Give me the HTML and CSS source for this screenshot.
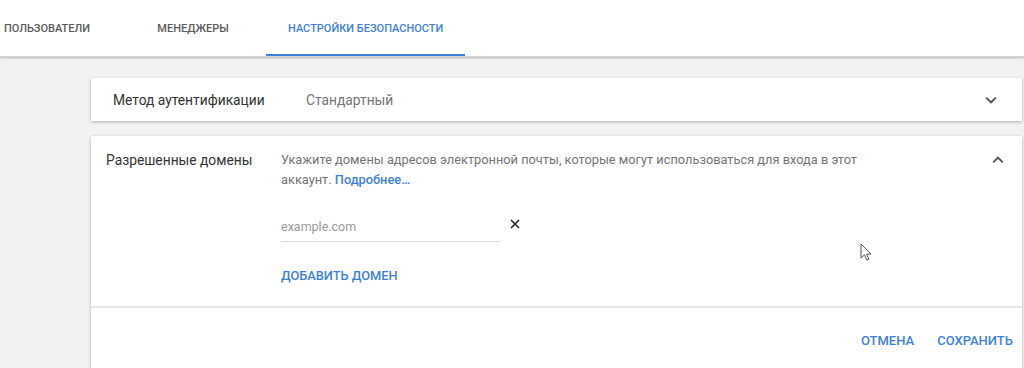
FILE: index.html
```html
<!DOCTYPE html>
<html lang="ru">
<head>
    <meta charset="UTF-8">
    <meta name="viewport" content="width=device-width, initial-scale=1.0">
    <title>Настройки безопасности</title>
    <link rel="stylesheet" href="styles.css">
</head>
<body>

    <div class="tabs">
        <div class="tab">Пользователи</div>
        <div class="tab">Менеджеры</div>
        <div class="tab active">Настройки безопасности</div>
    </div>

    <div class="content">
        <div class="card row">
            <div class="label">Метод аутентификации</div>
            <div class="value">Стандартный</div>
            <svg class="chevron" width="22" height="22" viewBox="0 0 24 24"><path d="M7.4 8.6 12 13.2l4.6-4.6L18 10l-6 6-6-6z" fill="#555"/></svg>
        </div>

        <div class="card expanded">
            <div class="body">
                <div class="label">Разрешенные домены</div>
                <div class="details">
                    <p class="hint">Укажите домены адресов электронной почты, которые могут использоваться для входа в этот аккаунт. <a href="#">Подробнее…</a></p>

                    <div class="domain">
                        <input type="text" placeholder="example.com">
                        <svg class="remove" width="10" height="10" viewBox="0 0 10 10"><path d="M1 1l8 8M9 1 1 9" stroke="#222" stroke-width="1.6"/></svg>
                    </div>

                    <button class="link">Добавить домен</button>
                </div>
                <svg class="chevron up" width="22" height="22" viewBox="0 0 24 24"><path d="M7.4 15.4 12 10.8l4.6 4.6L18 14l-6-6-6 6z" fill="#555"/></svg>
            </div>
            <div class="actions">
                <button class="link">Отмена</button>
                <button class="link">Сохранить</button>
            </div>
        </div>
    </div>

    <!-- mouse pointer from the screen capture -->
    <svg class="pointer" width="14" height="20" viewBox="0 0 14 20"><path d="M1 1v14l3.5-3.2 2.3 5.2 2-.9-2.2-5H11z" fill="#fff" stroke="#555" stroke-width="1"/></svg>

</body>
</html>
```

FILE: styles.css
```css
body {
    font-family: Roboto, "Noto Sans", Arial, sans-serif;
    margin: 0;
    height: 368px;
    overflow: hidden;
    background-color: #f2f2f2;
    position: relative;
}

.tabs {
    display: flex;
    height: 56px;
    background-color: #fff;
    border-bottom: 1px solid #d6d6d6;
    box-shadow: 0 1px 2px rgba(0, 0, 0, 0.25);
}

.tabs .tab {
    min-width: 102px;
    padding: 2px 22px 0;
    display: flex;
    align-items: center;
    justify-content: center;
    font-size: 11px;
    font-weight: 500;
    text-transform: uppercase;
    color: #5a5a5a;
    border-bottom: 2px solid transparent;
}

.tabs .tab:first-child {
    margin-left: -26px;
}

.tabs .tab.active {
    color: #3f7fe0;
    border-bottom-color: #3f7fe0;
}

.content {
    padding: 21px 2px 0 91px;
    display: flex;
    flex-direction: column;
    gap: 15px;
}

.card {
    background-color: #fff;
    box-shadow: 0 1px 3px rgba(0, 0, 0, 0.28);
}

.row {
    display: flex;
    align-items: center;
    height: 43px;
    padding: 0 20px 0 22px;
    font-size: 13.8px;
}

.row .label {
    width: 193px;
    color: #333;
}

.row .value {
    flex: 1;
    color: #757575;
}

.expanded .body {
    display: flex;
    padding: 14px 13px 0 15px;
    height: 156px;
    border-bottom: 2px solid #e6e6e6;
}

.expanded .label {
    width: 175px;
    font-size: 13.8px;
    color: #333;
    line-height: 20px;
}

.details {
    flex: 1;
}

.hint {
    margin: 0;
    max-width: 590px;
    font-size: 12.8px;
    line-height: 20px;
    color: #757575;
}

.hint a {
    color: #3f7fe0;
    text-decoration: none;
    font-weight: 500;
}

.domain {
    display: flex;
    align-items: center;
    gap: 10px;
    margin-top: 23px;
}

.domain input {
    width: 219px;
    border: none;
    border-bottom: 1px solid #dcdcdc;
    padding: 6px 0 7px;
    font-family: inherit;
    font-size: 12.5px;
    outline: none;
    box-sizing: border-box;
}

.domain input::placeholder {
    color: #9a9a9a;
}

.remove {
    margin-top: -8px;
}

.link {
    background: none;
    border: none;
    padding: 0;
    font-family: inherit;
    font-size: 12.8px;
    font-weight: 500;
    text-transform: uppercase;
    color: #3f7fe0;
    cursor: pointer;
}

.details .link {
    margin-top: 26px;
}

.chevron.up {
    margin-top: -1px;
}

.actions {
    display: flex;
    align-items: center;
    justify-content: flex-end;
    gap: 23px;
    padding-right: 9px;
    height: 64px;
}

.actions .link {
    font-size: 13px;
}

.pointer {
    position: absolute;
    left: 860px;
    top: 243px;
}
```
